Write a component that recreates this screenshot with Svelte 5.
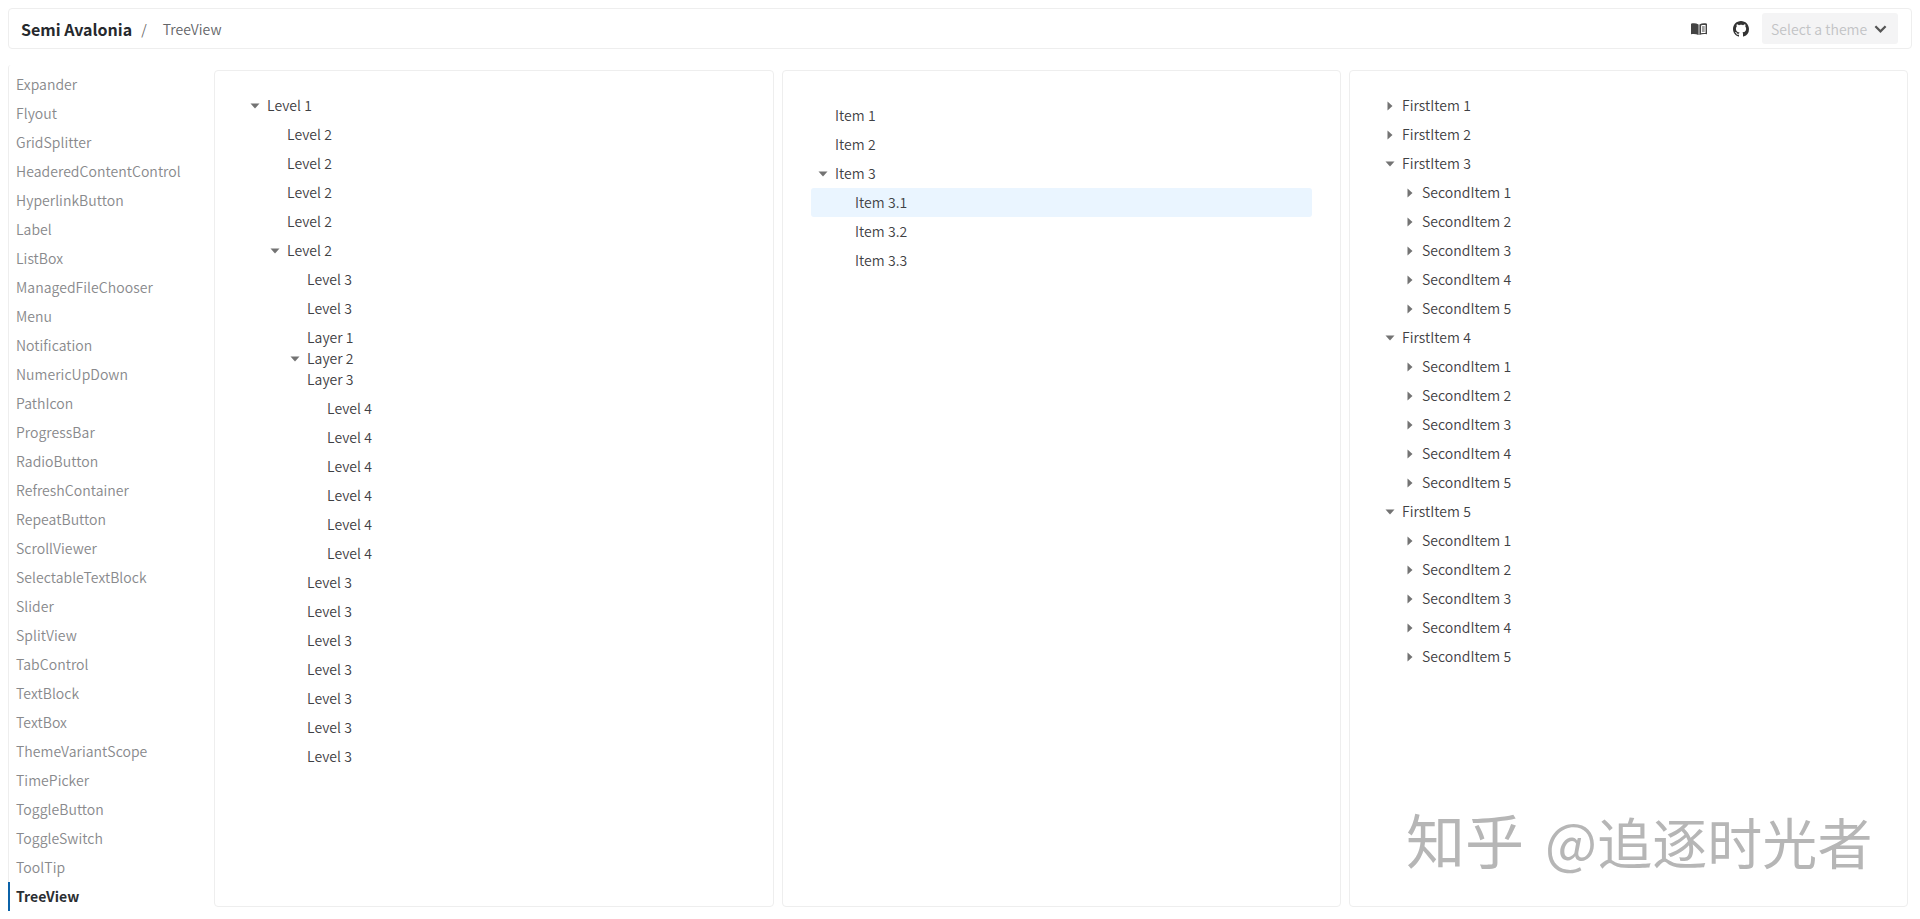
<script>
	const menu = ["Expander","Flyout","GridSplitter","HeaderedContentControl","HyperlinkButton","Label","ListBox","ManagedFileChooser","Menu","Notification","NumericUpDown","PathIcon","ProgressBar","RadioButton","RefreshContainer","RepeatButton","ScrollViewer","SelectableTextBlock","Slider","SplitView","TabControl","TextBlock","TextBox","ThemeVariantScope","TimePicker","ToggleButton","ToggleSwitch","ToolTip","TreeView"];

	const leaves = (name, n) => Array.from({ length: n }, () => ({ label: name }));

	const levels = [{
		label: "Level 1", open: true, kids: [
			...leaves("Level 2", 4),
			{ label: "Level 2", open: true, kids: [
				...leaves("Level 3", 2),
				{ layers: true, label: "Layer 1", open: true, kids: leaves("Level 4", 6) },
				...leaves("Level 3", 7)
			]}
		]
	}];

	const items = [
		{ label: "Item 1" },
		{ label: "Item 2" },
		{ label: "Item 3", open: true, kids: [
			{ label: "Item 3.1", selected: true },
			{ label: "Item 3.2" },
			{ label: "Item 3.3" }
		]}
	];

	const seconds = () => [1,2,3,4,5].map((n) => ({ label: "SecondItem " + n, closed: true }));
	const firsts = [
		{ label: "FirstItem 1", closed: true },
		{ label: "FirstItem 2", closed: true },
		{ label: "FirstItem 3", open: true, kids: seconds() },
		{ label: "FirstItem 4", open: true, kids: seconds() },
		{ label: "FirstItem 5", open: true, kids: seconds() }
	];
</script>

{#snippet caret(open)}
	<svg class="caret" viewBox="0 0 12 12">
		{#if open}
			<path d="M1.5 3.5h9L6 8.5z" />
		{:else}
			<path d="M3.5 1.5v9L8.5 6z" />
		{/if}
	</svg>
{/snippet}

{#snippet tree(nodes, depth)}
	{#each nodes as node}
		{#if node.layers}
			<div class="row layer first" style="padding-left:{depth * 20}px"><span class="text">Layer 1</span></div>
			<div class="row layer" style="padding-left:{depth * 20}px">{@render caret(true)}<span class="text">Layer 2</span></div>
			<div class="row layer last" style="padding-left:{depth * 20}px"><span class="text">Layer 3</span></div>
		{:else}
			<div class="row" class:selected={node.selected} style="padding-left:{depth * 20}px">
				{#if node.open || node.closed}{@render caret(node.open)}{/if}
				<span class="text">{node.label}</span>
			</div>
		{/if}
		{#if node.kids}
			{@render tree(node.kids, depth + 1)}
		{/if}
	{/each}
{/snippet}

<div class="page">
	<header class="topbar">
		<div class="crumbs">
			<span class="brand">Semi Avalonia</span>
			<span class="slash">/</span>
			<span class="current">TreeView</span>
		</div>
		<div class="actions">
			<svg class="icon book" viewBox="0 0 16 12">
				<path d="M0 .8C2.4.1 5 .2 7.6 1.4V12C5 10.9 2.4 10.8 0 11.3z" fill="#434343" />
				<path d="M8.4 1.4C10.9.2 13.6.1 16 .8v10.5c-2.4-.5-5-.4-7.6.7z" fill="#434343" />
				<path d="M10 2.4c1.5-.5 3-.6 4.6-.4v8c-1.6-.2-3.1-.1-4.6.3z" fill="#fff" />
				<path d="M10.9 3.4h2.8v1h-2.8zM10.9 5.4h2.8v1h-2.8zM10.9 7.4h2.8v1h-2.8z" fill="#434343" />
			</svg>
			<svg class="icon gh" viewBox="0 0 16 16">
				<path fill="#333" d="M8 0C3.58 0 0 3.58 0 8c0 3.54 2.29 6.53 5.47 7.59.4.07.55-.17.55-.38 0-.19-.01-.82-.01-1.49-2.01.37-2.53-.49-2.69-.94-.09-.23-.48-.94-.82-1.13-.28-.15-.68-.52-.01-.53.63-.01 1.08.58 1.23.82.72 1.21 1.87.87 2.33.66.07-.52.28-.87.51-1.07-1.78-.2-3.64-.89-3.64-3.95 0-.87.31-1.59.82-2.15-.08-.2-.36-1.02.08-2.12 0 0 .67-.21 2.2.82.64-.18 1.32-.27 2-.27s1.36.09 2 .27c1.53-1.04 2.2-.82 2.2-.82.44 1.1.16 1.92.08 2.12.51.56.82 1.27.82 2.15 0 3.07-1.87 3.75-3.65 3.95.29.25.54.73.54 1.48 0 1.07-.01 1.93-.01 2.2 0 .21.15.46.55.38A8.01 8.01 0 0 0 16 8c0-4.42-3.58-8-8-8z" />
			</svg>
			<div class="select">
				<span>Select a theme</span>
				<svg class="chev" viewBox="0 0 14 10"><path d="M1.5 2L7 7.5 12.5 2" fill="none" stroke="#555" stroke-width="2.4" /></svg>
			</div>
		</div>
	</header>

	<div class="body">
		<nav class="side">
			{#each menu as name}
				<div class="link" class:active={name === "TreeView"}>{name}</div>
			{/each}
		</nav>
		<main class="panels">
			<section class="panel"><div class="tree">{@render tree(levels, 0)}</div></section>
			<section class="panel"><div class="tree middle">{@render tree(items, 0)}</div></section>
			<section class="panel"><div class="tree">{@render tree(firsts, 0)}</div></section>
		</main>
	</div>

	<div class="watermark"><span class="zh">知乎</span><span class="at">@追逐时光者</span></div>
</div>

<style>
	:global(body) {
		background: #fff;
	}
	.page {
		height: 919px;
		box-sizing: border-box;
		padding: 8px 8px 12px;
		display: flex;
		flex-direction: column;
		font-family: "Noto Sans CJK SC", "Noto Sans", sans-serif;
		font-size: 14px;
		font-weight: 350;
		letter-spacing: 0.05px;
		color: #3f4144;
		overflow: hidden;
	}
	.topbar {
		height: 41px;
		flex: none;
		box-sizing: border-box;
		display: flex;
		align-items: center;
		justify-content: space-between;
		padding: 0 13px 0 12px;
		border: 1px solid #eeeeee;
		border-radius: 4px;
	}
	.crumbs {
		display: flex;
		align-items: center;
	}
	.brand {
		font-size: 16px;
		font-weight: 700;
		letter-spacing: 0;
		color: #26292d;
	}
	.slash {
		margin: 0 16px 0 9px;
		color: #666;
	}
	.current {
		color: #646669;
	}
	.actions {
		display: flex;
		align-items: center;
	}
	.icon {
		display: block;
	}
	.book {
		width: 16px;
		height: 12px;
		margin-right: 26px;
	}
	.gh {
		width: 16px;
		height: 16px;
		margin-right: 13px;
	}
	.select {
		width: 136px;
		height: 31px;
		box-sizing: border-box;
		background: #f4f4f5;
		border-radius: 3px;
		display: flex;
		align-items: center;
		justify-content: space-between;
		padding: 0 11px 0 9px;
		color: #c2c3c5;
	}
	.chev {
		width: 13px;
		height: 10px;
	}
	.body {
		flex: 1;
		display: flex;
		min-height: 0;
		margin-top: 16px;
	}
	.side {
		width: 199px;
		flex: none;
		border-left: 1px solid #eeeeee;
		border-radius: 3px;
		padding-top: 5px;
		box-sizing: border-box;
	}
	.link {
		height: 29px;
		line-height: 29px;
		padding-left: 7px;
		color: #88898c;
	}
	.active {
		margin-left: -1px;
		padding-left: 8px;
		font-weight: 700;
		color: #2b2e32;
		box-shadow: inset 2px 0 0 #0b62a8;
	}
	.panels {
		flex: 1;
		display: grid;
		grid-template-columns: 560px 559px 1fr;
		gap: 8px;
		margin: 5px 4px 0 7px;
	}
	.panel {
		border: 1px solid #eeeeee;
		border-radius: 4px;
		padding: 20px 28px;
	}
	.middle {
		padding-top: 10px;
	}
	.row {
		height: 29px;
		box-sizing: border-box;
		position: relative;
		display: flex;
		align-items: center;
	}
	.row.selected {
		background: #eaf5ff;
		border-radius: 3px;
	}
	.layer {
		height: 21px;
	}
	.layer.first {
		height: 25px;
		padding-top: 4px;
	}
	.layer.last {
		height: 25px;
		padding-bottom: 4px;
	}
	.text {
		margin-left: 24px;
		line-height: 21px;
		white-space: nowrap;
	}
	.caret {
		width: 12px;
		height: 12px;
		position: absolute;
		margin-left: 6px;
		fill: #737373;
	}
	.watermark {
		position: absolute;
		left: 1406px;
		top: 804px;
		color: #b6b6b6;
		white-space: nowrap;
		line-height: 70px;
		font-size: 55px;
		font-weight: 400;
		display: flex;
		align-items: baseline;
		gap: 21px;
	}
	.zh {
		font-size: 59px;
	}
</style>
